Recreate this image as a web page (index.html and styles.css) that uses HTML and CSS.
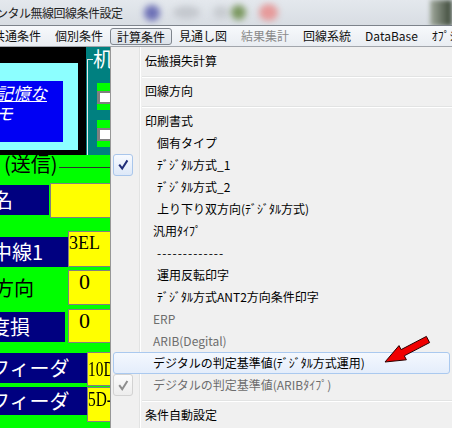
FILE: index.html
```html
<!DOCTYPE html>
<html lang="ja">
<head>
<meta charset="utf-8">
<title>デジタル無線回線条件設定</title>
<link rel="stylesheet" href="styles.css">
</head>
<body>
<div class="window">
  <div class="titlebar">
    <span class="title">ンタル無線回線条件設定</span>
    <span class="blob blob-purple"></span>
    <span class="blob blob-gray1"></span>
    <span class="blob blob-gray2"></span>
    <span class="blob blob-green"></span>
    <span class="blob blob-red"></span>
    <span class="blob blob-dark"></span>
  </div>
  <div class="menubar">
    <span class="mi">共通条件</span>
    <span class="mi">個別条件</span>
    <span class="mi active">計算条件</span>
    <span class="mi">見通し図</span>
    <span class="mi disabled">結果集計</span>
    <span class="mi">回線系統</span>
    <span class="mi">DataBase</span>
    <span class="mi">ｵﾌﾟｼｮﾝ</span>
  </div>
  <div class="client">
    <div class="panel-top">
      <div class="frame">
        <div class="cyan">
          <div class="blue">
            <p class="u">記憶な</p>
            <p>モ</p>
          </div>
        </div>
      </div>
      <div class="teal">
        <fieldset class="grp">
          <legend>机</legend>
          <div class="chk-block first"><div class="chk"></div></div>
          <div class="chk-block"><div class="chk"></div></div>
        </fieldset>
      </div>
    </div>
    <div class="green">
      <div class="row sec">
        <span class="sec-text">(送信)</span>
        <span class="sec-line"></span>
      </div>
      <div class="row r-name">
        <div class="lbl lbl-name">名</div>
        <div class="val val-name"></div>
      </div>
      <div class="row r-ant">
        <div class="lbl lbl-ant">中線1</div>
        <div class="val v-3el">3EL</div>
      </div>
      <div class="row r-dir">
        <div class="lbl lbl-dir">方向</div>
        <div class="val v-num">0</div>
      </div>
      <div class="row r-loss">
        <div class="lbl lbl-loss">度損</div>
        <div class="val v-num">0</div>
      </div>
      <div class="row r-feed1">
        <div class="lbl lbl-feed">フィーダ</div>
        <div class="val v-feed v-feed1"><span class="narrow">10D</span></div>
      </div>
      <div class="row r-feed2">
        <div class="lbl lbl-feed lbl-feed2">フィーダ</div>
        <div class="val v-feed"><span class="narrow">5D-</span></div>
      </div>
    </div>

    <div class="dropdown">
      <div class="item"><span class="ic"></span><span class="lbl0">伝搬損失計算</span></div>
      <div class="sep"></div>
      <div class="item"><span class="ic"></span><span class="lbl0">回線方向</span></div>
      <div class="sep"></div>
      <div class="item"><span class="ic"></span><span class="lbl0">印刷書式</span></div>
      <div class="item"><span class="ic"></span><span class="lbl2">個有タイプ</span></div>
      <div class="item"><span class="ic check"><svg width="18" height="20" viewBox="0 0 18 20"><path d="M5.2 9.6 L8.2 13.6 L13.4 5.4" fill="none" stroke="#1f2d78" stroke-width="2"/></svg></span><span class="lbl2">ﾃﾞｼﾞﾀﾙ方式_1</span></div>
      <div class="item"><span class="ic"></span><span class="lbl2">ﾃﾞｼﾞﾀﾙ方式_2</span></div>
      <div class="item"><span class="ic"></span><span class="lbl2">上り下り双方向(ﾃﾞｼﾞﾀﾙ方式)</span></div>
      <div class="item"><span class="ic"></span><span class="lbl1">汎用ﾀｲﾌﾟ</span></div>
      <div class="item"><span class="ic"></span><span class="lbl2 dashes">-------------</span></div>
      <div class="item"><span class="ic"></span><span class="lbl2">運用反転印字</span></div>
      <div class="item"><span class="ic"></span><span class="lbl2">ﾃﾞｼﾞﾀﾙ方式ANT2方向条件印字</span></div>
      <div class="item disabled"><span class="ic"></span><span class="lbl1">ERP</span></div>
      <div class="item disabled"><span class="ic"></span><span class="lbl1">ARIB(Degital)</span></div>
      <div class="item hover"><span class="ic"></span><span class="lbl1">デジタルの判定基準値(ﾃﾞｼﾞﾀﾙ方式運用)</span></div>
      <div class="item disabled"><span class="ic check check-gray"><svg width="18" height="20" viewBox="0 0 18 20"><path d="M5.2 10.2 L8.2 14.2 L13.4 6" fill="none" stroke="#8e8e8e" stroke-width="2"/></svg></span><span class="lbl1">デジタルの判定基準値(ARIBﾀｲﾌﾟ)</span></div>
      <div class="sep"></div>
      <div class="item"><span class="ic"></span><span class="lbl0">条件自動設定</span></div>
    </div>

    <svg class="arrow" width="55" height="40" viewBox="0 0 55 40">
      <polygon points="5,32 19,15.6 21.1,19.6 46.4,6.4 49.6,12.6 24.3,25.8 26.4,29.8" fill="#f00000" stroke="#2a0000" stroke-width="1"/>
    </svg>
  </div>
</div>
</body>
</html>
```

FILE: styles.css
```css
* { box-sizing: border-box; }
html, body { margin: 0; padding: 0; }
body {
  width: 452px;
  height: 428px;
  overflow: hidden;
  background: #f0f0f0;
  font-family: "Noto Sans CJK JP", "Noto Sans", sans-serif;
  font-size: 12px;
  color: #000;
}
.window {
  width: 452px;
  height: 428px;
  overflow: hidden;
  display: flex;
  flex-direction: column;
}

/* title bar */
.titlebar {
  height: 26px;
  flex: none;
  display: flex;
  align-items: center;
  background: linear-gradient(#e4e8ed, #d8dde3);
  border-bottom: 1px solid #7d838b;
  overflow: hidden;
}
.title {
  flex: none;
  margin-left: -4px;
  font-size: 12px;
  letter-spacing: -0.5px;
  line-height: 25px;
  color: #1e1e1e;
  white-space: nowrap;
}
.blob { flex: none; border-radius: 50%; filter: blur(3px); }
.blob-purple { width: 16px; height: 16px; margin-left: 21px; background: #6d71b6; }
.blob-gray1 { width: 27px; height: 13px; margin-left: 13px; background: #c4c8ce; }
.blob-gray2 { width: 16px; height: 13px; margin-left: 13px; background: #c8ccd1; }
.blob-green { width: 15px; height: 15px; margin-left: 2px; background: #7b985f; }
.blob-red { width: 19px; height: 17px; margin-left: 13px; background: #e69a9a; }
.blob-dark {
  margin-left: auto;
  width: 22px;
  height: 26px;
  border-radius: 0;
  background: linear-gradient(to right, #a3ab9f, #3a4636);
  filter: blur(2px);
}

/* menu bar */
.menubar {
  height: 21px;
  flex: none;
  display: flex;
  background: linear-gradient(#f7f9fc, #e9edf2);
  border-bottom: 1px solid #a2a6ac;
  white-space: nowrap;
  overflow: hidden;
}
.mi { flex: none; padding: 0 7px; line-height: 20px; color: #111; }
.mi:first-child { margin-left: -14px; }
.mi.active {
  margin: 2px 0 1px;
  padding: 0 6px;
  line-height: 15px;
  border: 1px solid #7f858d;
  border-radius: 3px;
  background: linear-gradient(#eef1f5, #dce2e9);
}
.mi.disabled { color: #8a8a8a; }

/* client area */
.client {
  position: relative;
  flex: 1;
  overflow: hidden;
  background: #00ff00;
}
.panel-top {
  height: 108px;
  display: flex;
  background: #000;
  overflow: hidden;
}
.frame { width: 86px; flex: none; padding-top: 16px; }
.cyan { width: 78px; height: 87px; background: #8cffff; padding-top: 18px; }
.blue {
  width: 63px;
  height: 61px;
  background: #0000f4;
  color: #fff;
  font-size: 17px;
  font-style: italic;
  line-height: 20px;
  padding-top: 2px;
  overflow: hidden;
}
.blue p { margin: 0 0 0 -4px; white-space: nowrap; }
.blue .u { text-decoration: underline; }
.teal { flex: 1; background: #008080; padding-left: 1px; }
.grp {
  margin: 0;
  padding: 0 0 0 5px;
  height: 112px;
  min-width: 0;
  border: 1px solid #e8e8e8;
  border-right: none;
  border-bottom: none;
}
.grp legend {
  padding: 0;
  color: #fff;
  font-size: 20px;
  line-height: 24px;
}
.chk-block {
  width: 40px;
  height: 27px;
  margin: 10px 0 0 4px;
  padding-top: 8px;
  background: #00ff00;
}
.chk-block.first { margin-top: 12px; }
.chk {
  height: 13px;
  background: #fff;
  border: 2px solid #808080;
  border-left-width: 3px;
  border-right: none;
}

/* green panel */
.green { display: flex; flex-direction: column; }
.row { display: flex; flex: none; }
.sec { height: 23px; align-items: flex-start; }
.sec-text {
  flex: none;
  margin-left: 4px;
  font-size: 20px;
  line-height: 18px;
  white-space: nowrap;
}
.sec-line { flex: 1; margin: 12px 0 0 1px; border-top: 1px solid #303030; }

.lbl {
  flex: none;
  height: 30px;
  background: #000080;
  color: #fff;
  font-size: 20px;
  line-height: 29px;
  white-space: nowrap;
  overflow: hidden;
}
.val {
  flex: none;
  width: 90px;
  background: #ffff00;
  border: 1px solid #808080;
  border-right: none;
  font-family: "Liberation Serif", serif;
  color: #000;
  white-space: nowrap;
  overflow: hidden;
}
.r-name { margin-top: 5px; height: 35px; }
.lbl-name { width: 49px; margin-top: 2px; text-indent: -7px; }
.val-name { margin-left: 1px; }

.r-ant { margin-top: 13px; height: 36px; }
.lbl-ant { width: 68px; align-self: flex-end; text-indent: -8px; }
.v-3el { font-size: 18px; line-height: 21px; padding-top: 1px; }

.r-dir { margin-top: 3px; height: 35px; }
.lbl-dir { width: 68px; height: 35px; line-height: 35px; background: transparent; color: #000; text-indent: -6px; }
.v-num { font-size: 22px; line-height: 22px; padding-left: 10px; }

.r-loss { margin-top: 4px; height: 34px; }
.lbl-loss { width: 65px; margin-top: 3px; margin-right: 3px; text-indent: -10px; }

.r-feed1 { margin-top: 9px; height: 34px; }
.r-feed2 { margin-top: 1px; height: 35px; }
.lbl-feed { width: 87px; margin-top: 1px; text-indent: -10px; }
.lbl-feed2 { height: 28px; margin-top: 0; line-height: 27px; }
.v-feed { font-size: 22px; line-height: 22px; }
.v-feed1 { padding-top: 5px; }
.narrow { display: inline-block; transform: scaleX(0.7); transform-origin: left center; }

/* dropdown menu */
.dropdown {
  position: absolute;
  left: 110px;
  top: 0;
  width: 342px;
  height: 381px;
  padding-top: 3px;
  border-left: 1px solid #979797;
  background:
    linear-gradient(to right, transparent 28px, #e2e3e3 28px, #e2e3e3 29px, #ffffff 29px, #ffffff 30px, transparent 30px),
    #f0f0f0;
  white-space: nowrap;
}
.item {
  display: flex;
  align-items: center;
  height: 22px;
  margin: 0 2px;
  border: 1px solid transparent;
  border-radius: 3px;
  line-height: 20px;
  color: #000;
}
.item.disabled { color: #6d6d6d; }
.item.hover {
  border-color: #aac9ef;
  background: linear-gradient(#f4f8fe, #e4edfb);
}
.ic {
  flex: none;
  width: 20px;
  height: 22px;
  margin: -1px 0 -1px -1px;
}
.ic.check {
  display: flex;
  align-items: center;
  justify-content: center;
  border: 1px solid #a9c6eb;
  border-radius: 3px;
  background: linear-gradient(#f7faff, #dde8f8);
}
.ic.check-gray {
  border-color: #d2d2d2;
  background: linear-gradient(#fbfbfb, #ededed);
}
.lbl0 { margin-left: 12px; }
.lbl1 { margin-left: 20px; }
.lbl2 { margin-left: 24px; }
.dashes { letter-spacing: 1px; }
.sep {
  margin: 4px 0 2px 31px;
  height: 2px;
  border-top: 1px solid #e2e3e3;
  border-bottom: 1px solid #ffffff;
}

.arrow { position: absolute; left: 380px; top: 283px; }
```
